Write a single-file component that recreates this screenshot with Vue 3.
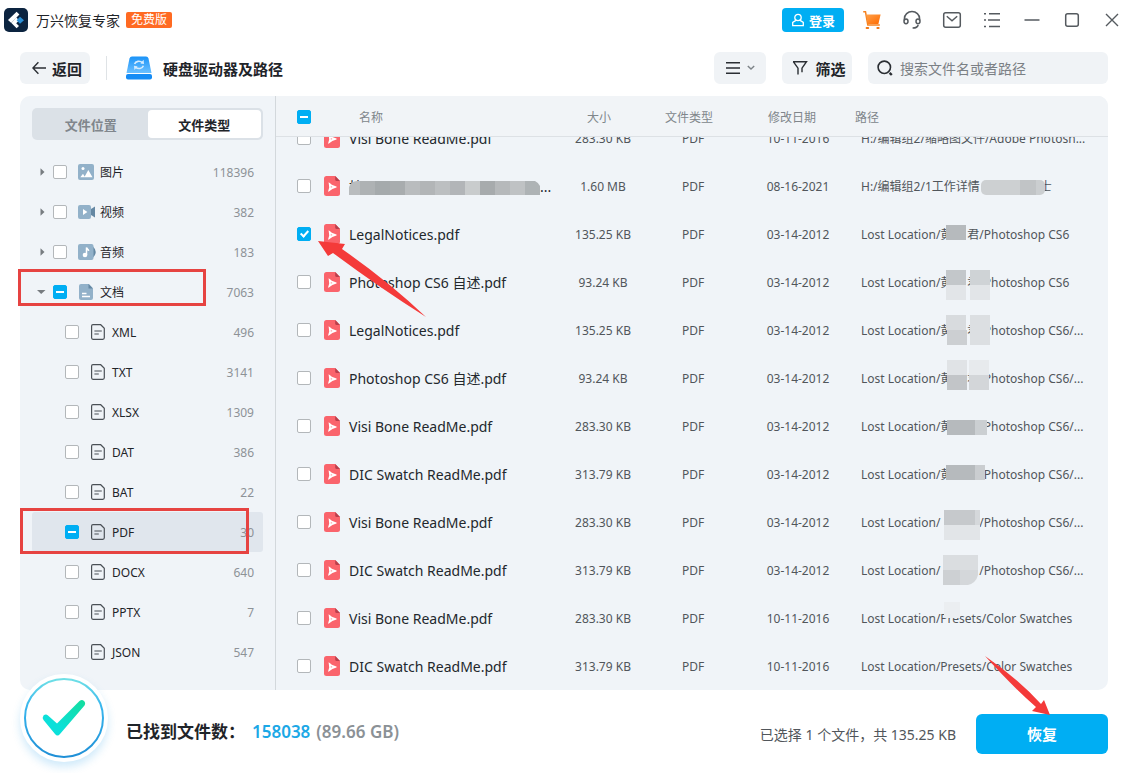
<script setup>
import { ref, onMounted } from 'vue'

const categories = [
  { name: '图片', icon: 'image', count: 118396 },
  { name: '视频', icon: 'video', count: 382 },
  { name: '音频', icon: 'audio', count: 183 },
  { name: '文档', icon: 'doc', count: 7063, open: true, partial: true }
]

const formats = [
  { name: 'XML', count: 496 },
  { name: 'TXT', count: 3141 },
  { name: 'XLSX', count: 1309 },
  { name: 'DAT', count: 386 },
  { name: 'BAT', count: 22 },
  { name: 'PDF', count: 30, partial: true },
  { name: 'DOCX', count: 640 },
  { name: 'PPTX', count: 7 },
  { name: 'JSON', count: 547 }
]

const swatches = 'Lost Location/Presets/Color Swatches'
const files = ref([
  { name: 'Visi Bone ReadMe.pdf', size: '283.30 KB', date: '10-11-2016', path: 'H:/编辑组2/缩略图文件/Adobe Photosh...' },
  { name: '按', nameGap: 177, nameEnd: '...', size: '1.60 MB', date: '08-16-2021', path: 'H:/编辑组2/1工作详情', gap: 60, end: '士' },
  { name: 'LegalNotices.pdf', size: '135.25 KB', date: '03-14-2012', path: 'Lost Location/黄', gap: 15, end: '君/Photoshop CS6', checked: true },
  { name: 'Photoshop CS6 自述.pdf', size: '93.24 KB', date: '03-14-2012', path: 'Lost Location/黄', gap: 15, end: '君/Photoshop CS6' },
  { name: 'LegalNotices.pdf', size: '135.25 KB', date: '03-14-2012', path: 'Lost Location/黄', gap: 15, end: '君/Photoshop CS6/...' },
  { name: 'Photoshop CS6 自述.pdf', size: '93.24 KB', date: '03-14-2012', path: 'Lost Location/黄', gap: 15, end: '君/Photoshop CS6/...' },
  { name: 'Visi Bone ReadMe.pdf', size: '283.30 KB', date: '03-14-2012', path: 'Lost Location/黄', gap: 27, end: '/Photoshop CS6/...' },
  { name: 'DIC Swatch ReadMe.pdf', size: '313.79 KB', date: '03-14-2012', path: 'Lost Location/黄', gap: 27, end: '/Photoshop CS6/...' },
  { name: 'Visi Bone ReadMe.pdf', size: '283.30 KB', date: '03-14-2012', path: 'Lost Location/', gap: 39, end: '/Photoshop CS6/...' },
  { name: 'DIC Swatch ReadMe.pdf', size: '313.79 KB', date: '03-14-2012', path: 'Lost Location/', gap: 39, end: '/Photoshop CS6/...' },
  { name: 'Visi Bone ReadMe.pdf', size: '283.30 KB', date: '10-11-2016', path: swatches },
  { name: 'DIC Swatch ReadMe.pdf', size: '313.79 KB', date: '10-11-2016', path: swatches }
])

const nameMosaic = ['#b9bcbe', '#aeb2b4', '#a5aaac', '#a8acae', '#b9bcbe', '#b2b5b7', '#bcbfc1', '#b2b5b8', '#c9cccd', '#a7abad', '#b6b9bb', '#bfc2c4', '#aeb3b5']

const list = ref(null)
onMounted(() => {
  list.value.scrollTop = list.value.scrollHeight
})
</script>

<template>
  <div class="app">
    <header class="titlebar">
      <svg class="logo" width="24" height="24" viewBox="0 0 24 24">
        <rect width="24" height="24" rx="5" fill="#0c2440" />
        <path d="M12.6 3.8 15.4 6.6 10.6 11.4 7.3 15 4 11.9z" fill="#fff" />
        <path d="M12.2 9.4 15.2 12.2 12.2 15.2 15 18 12.6 20.2 7.4 14.9z" fill="#fff" />
        <path d="M12.6 12.2 16 8.8 20 12.2 16 15.8z" fill="#2a8fd6" />
      </svg>
      <span class="product">万兴恢复专家</span>
      <span class="edition">免费版</span>
      <div class="actions">
        <button class="login">
          <svg width="14" height="14" viewBox="0 0 14 14" fill="none" stroke="#fff" stroke-width="1.3">
            <circle cx="7" cy="4.5" r="3.2" />
            <path d="M4.9 7.4 1.7 9.4v3.3h10.6V9.4L9.1 7.4" />
          </svg>
          登录
        </button>
        <button class="tool" aria-label="购物车">
          <svg width="20" height="20" viewBox="0 0 20 20">
            <defs>
              <linearGradient id="cart" x1="0" y1="0" x2="1" y2="1">
                <stop offset="0" stop-color="#ffa14a" />
                <stop offset="1" stop-color="#ff6a00" />
              </linearGradient>
            </defs>
            <path d="M1.2 1.8h2.3l2.3 13.3h12" fill="none" stroke="#f58220" stroke-width="1.5" />
            <path d="M4.1 4.4h14.5l-2.2 9.6H5.8z" fill="url(#cart)" />
            <rect x="3.6" y="17" width="3.6" height="2" rx="1" fill="#f07818" />
            <rect x="14.4" y="17" width="3.2" height="2" rx="1" fill="#f07818" />
          </svg>
        </button>
        <button class="tool" aria-label="客服">
          <svg width="20" height="20" viewBox="0 0 20 20" fill="none" stroke="#555a5f" stroke-width="1.5">
            <path d="M2.4 10.5V8.7a7.6 7.2 0 0 1 15.2 0v1.8" />
            <ellipse cx="4" cy="11.3" rx="2" ry="2.4" />
            <ellipse cx="16" cy="11.3" rx="2" ry="2.4" />
            <path d="M16.2 15c-.5 2-2.400 3-5.600 3.100" />
          </svg>
        </button>
        <button class="tool" aria-label="邮件">
          <svg width="20" height="20" viewBox="0 0 20 20" fill="none" stroke="#555a5f" stroke-width="1.5">
            <rect x="1.7" y="2.7" width="16.6" height="14.6" rx="2" />
            <path d="m4.8 6.3 5.2 4.4 5.2-4.4" />
          </svg>
        </button>
        <button class="tool" aria-label="菜单">
          <svg width="20" height="20" viewBox="0 0 20 20" fill="none" stroke="#555a5f" stroke-width="1.5">
            <path d="M2 3.8h2M7 3.8h11M2 10h2M6 10h12M2 16.4h2M7 16.4h11" />
          </svg>
        </button>
        <button class="tool" aria-label="最小化">
          <svg width="20" height="20" viewBox="0 0 20 20"><path d="M2.5 10h15" stroke="#555a5f" stroke-width="1.5" /></svg>
        </button>
        <button class="tool" aria-label="最大化">
          <svg width="20" height="20" viewBox="0 0 20 20"><rect x="3.7" y="3.7" width="12.6" height="12.6" rx="2" fill="none" stroke="#555a5f" stroke-width="1.5" /></svg>
        </button>
        <button class="tool" aria-label="关闭">
          <svg width="20" height="20" viewBox="0 0 20 20"><path d="m4 4 12 12M16 4 4 16" stroke="#555a5f" stroke-width="1.4" /></svg>
        </button>
      </div>
    </header>

    <div class="toolbar">
      <button class="pill back">
        <svg width="14" height="14" viewBox="0 0 14 14" fill="none" stroke="#2a2e33" stroke-width="1.4"><path d="M14 7H1M6.4 1.2.9 7l5.5 5.8" /></svg>
        返回
      </button>
      <span class="divider"></span>
      <svg width="26" height="24" viewBox="0 0 26 24">
        <defs>
          <linearGradient id="disk" x1="0" y1="0" x2="0" y2="1">
            <stop offset="0" stop-color="#1a93f8" />
            <stop offset="1" stop-color="#6cc0ff" />
          </linearGradient>
        </defs>
        <path d="M6 .5h14q2 0 2.5 2L25.5 17H.5L3.5 2.500Q4 .5 6 .5z" fill="url(#disk)" />
        <rect x="0" y="18" width="26" height="5.500" rx="2" fill="#158cf5" />
        <g fill="none" stroke="#d5ecff" stroke-width="1.6">
          <path d="M8.600 8c1-3 5.400-3.600 7.800-1.300M17.400 9.800c-1 3-5.400 3.600-7.800 1.300" />
        </g>
        <path d="m17.600 3.800.4 4.200-3.600-.6zM8.400 14l-.4-4.200 3.600.6z" fill="#d5ecff" />
      </svg>
      <h1>硬盘驱动器及路径</h1>
      <div class="right">
        <button class="pill view" aria-label="视图">
          <svg width="16" height="14" viewBox="0 0 16 14"><path d="M1 1.800h14M1 7h14M1 12.200h14" stroke="#2a2e33" stroke-width="1.5" /></svg>
          <svg width="8" height="6" viewBox="0 0 8 6"><path d="m.8.9 3.200 3.200L7.200.9" fill="none" stroke="#7d8388" stroke-width="1.4" /></svg>
        </button>
        <button class="pill filter">
          <svg width="16" height="16" viewBox="0 0 16 16" fill="none" stroke="#2a2e33" stroke-width="1.4">
            <path d="M1 1.700h13.500L10 8.200v4M6 14.500V8.200L1.300 1.700" />
          </svg>
          筛选
        </button>
        <label class="pill search">
          <svg width="16" height="16" viewBox="0 0 16 16" fill="none" stroke="#2a2e33" stroke-width="1.6">
            <circle cx="7.300" cy="7.300" r="6.200" />
            <path d="m12.600 12.800 2.200 2.200" stroke-width="2.400" />
          </svg>
          <input type="text" placeholder="搜索文件名或者路径" aria-label="搜索文件名或者路径" />
        </label>
      </div>
    </div>

    <main class="panel">
      <aside>
        <div class="tabs">
          <button>文件位置</button>
          <button class="active">文件类型</button>
        </div>
        <ul class="tree">
          <li v-for="c in categories" :key="c.name">
            <svg class="caret" width="9" height="8" viewBox="0 0 9 8">
              <path :d="c.open ? 'M0 2h8.500L4.200 6z' : 'M3.500.3v7.400L7.500 4z'" fill="#777c80" />
            </svg>
            <label>
              <input type="checkbox" :indeterminate="c.partial" />
              <svg class="cat" width="20" height="16" viewBox="0 0 20 16">
                <template v-if="c.icon === 'image'">
                  <rect width="16" height="16" rx="2" fill="#92b1c9" />
                  <circle cx="5" cy="4.600" r="1.500" fill="#fff" />
                  <path d="M2.300 13.300 5 9.800l2 3.500zM6.300 13.300l4-7.300 4.200 7.300z" fill="#fff" />
                </template>
                <template v-else-if="c.icon === 'video'">
                  <path d="m13 5 4-2.600v11.200L13 11z" fill="#6588a3" />
                  <rect y="1" width="13" height="14" rx="2" fill="#92b1c9" />
                  <path d="M5 5v6l4.400-3z" fill="#fff" />
                </template>
                <template v-else-if="c.icon === 'audio'">
                  <path d="M15 2.500q5.500 5.500 0 11z" fill="#6588a3" />
                  <rect width="15.500" height="16" rx="2" fill="#92b1c9" />
                  <circle cx="7" cy="11" r="2.300" fill="#fff" />
                  <path d="M8.500 11V3.500c.3 1.600 1.800 1.600 2.200 3.300" fill="none" stroke="#fff" stroke-width="1.500" />
                </template>
                <template v-else>
                  <path d="M3 0h8l4 4.500V14q0 2-2 2H3q-2 0-2-2V2q0-2 2-2z" fill="#92b1c9" />
                  <path d="M10.500 0v4.500H15z" fill="#6588a3" />
                  <path d="M4 9.500h4.500M4 12.500h8" stroke="#fff" stroke-width="1.300" />
                </template>
              </svg>
              <span>{{ c.name }}</span>
            </label>
            <span class="count">{{ c.count }}</span>
          </li>
          <li v-for="f in formats" :key="f.name" class="child" :class="{ current: f.partial }">
            <label>
              <input type="checkbox" :indeterminate="f.partial" />
              <svg class="fmt" width="14" height="16" viewBox="0 0 14 16" fill="none" stroke="#4b5157" stroke-width="1.200">
                <path d="M2 .7h7.700l3.600 3.500v9.600q0 1.500-1.500 1.500H2q-1.400 0-1.400-1.500V2.100Q.6.700 2 .7z" />
                <path d="M3.400 7h7.400M3.400 10h4.400" />
              </svg>
              <span>{{ f.name }}</span>
            </label>
            <span class="count">{{ f.count }}</span>
          </li>
        </ul>
      </aside>

      <section ref="list" class="list">
        <table>
          <colgroup>
            <col class="c-check" /><col class="c-name" /><col class="c-size" /><col class="c-type" /><col class="c-date" /><col />
          </colgroup>
          <thead>
            <tr>
              <th class="check"><input type="checkbox" :indeterminate="true" aria-label="全选" /></th>
              <th class="name">名称</th>
              <th>大小</th>
              <th>文件类型</th>
              <th>修改日期</th>
              <th class="path">路径</th>
            </tr>
          </thead>
          <tbody>
            <tr v-for="(f, i) in files" :key="i">
              <td class="check"><input v-model="f.checked" type="checkbox" :aria-label="f.name" /></td>
              <td class="name">
                <div>
                  <svg width="16" height="20" viewBox="0 0 16 20">
                    <path d="M2.500 0h8.700L16 5v12.500q0 2.500-2.500 2.500h-11Q0 20 0 17.500v-15Q0 0 2.500 0z" fill="#fa646c" />
                    <path d="M11.200 0v3.500q0 1.500 1.500 1.500H16z" fill="#b93f4c" />
                    <path d="M4.600 6.200q2 1 3.200 2.500l4.600 1.900q.8.500 0 1L8.400 13l-3.500 2.600q-1 .3-.7-.6l1-3.500z" fill="#fff" />
                    <path d="m6.800 10.300 1.700.7-1.700.6z" fill="#fa646c" />
                  </svg>
                  <span>{{ f.name }}<i v-if="f.nameGap" class="gap" :style="{ width: f.nameGap + 'px' }"></i>{{ f.nameEnd }}</span>
                </div>
              </td>
              <td class="size">{{ f.size }}</td>
              <td class="type">PDF</td>
              <td class="date">{{ f.date }}</td>
              <td class="path">{{ f.path }}<i v-if="f.gap" class="gap" :style="{ width: f.gap + 'px' }"></i>{{ f.end }}</td>
            </tr>
          </tbody>
        </table>
      </section>
    </main>

    <footer>
      <div class="status">
        <svg width="80" height="80" viewBox="0 0 80 80" fill="none">
          <defs>
            <linearGradient id="ring" x1="0" y1="0" x2="0" y2="1">
              <stop offset="0" stop-color="#6fe0e6" />
              <stop offset=".35" stop-color="#38b6ee" />
              <stop offset="1" stop-color="#1f8fd6" />
            </linearGradient>
            <linearGradient id="tick" x1="0" y1="1" x2="1" y2="0">
              <stop offset=".3" stop-color="#0be0da" />
              <stop offset="1" stop-color="#14dd9c" />
            </linearGradient>
          </defs>
          <circle cx="40" cy="40" r="39" fill="#fff" stroke="url(#ring)" stroke-width="2" />
          <path d="M19.500 37.500q2.500-2 4.500 0l9 8L55.500 23q2.500-2 4.500 0t.5 4.500L36 56q-2.500 3-5 0L19.500 42q-1.500-2.500 0-4.500z" fill="url(#tick)" />
        </svg>
      </div>
      <p class="found">已找到文件数：<b>158038</b><span>(89.66 GB)</span></p>
      <p class="chosen">已选择 1 个文件，共 135.25 KB</p>
      <button class="recover">恢复</button>
    </footer>

    <svg class="notes" width="1126" height="773" viewBox="0 0 1126 773" aria-hidden="true">
      <defs>
        <clipPath id="name-clip"><path d="M349 195v-8q2-6 8-6h178q4 2 5 5v9z" /></clipPath>
        <clipPath id="path-clip"><rect x="981" y="180" width="64" height="15" rx="5" /></clipPath>
        <clipPath id="blob-clip"><path d="M943 555h35v20q-2 8-10 10h-25z" /></clipPath>
      </defs>
      <g clip-path="url(#name-clip)">
        <rect v-for="(m, i) in nameMosaic" :key="i" :x="345 + i * 15" y="181" width="15" height="14" :fill="m" />
      </g>
      <g clip-path="url(#path-clip)">
        <rect x="980" y="180" width="40" height="15" fill="#cdd0d2" />
        <rect x="1020" y="180" width="16" height="15" fill="#c1c4c6" />
        <rect x="1036" y="180" width="12" height="15" fill="#cbced0" />
      </g>
      <rect x="946" y="225" width="20" height="15" fill="#b6babd" />
      <g>
        <path d="M946 270h20v15h-20z" fill="#c3c7ca" /><path d="M970 270h20v15h-20z" fill="#cfd3d6" />
        <path d="M946 285h20v15h-20zM970 285h20v15h-20z" fill="#e2e5e8" />
        <path d="M946 315h20v15h-20z" fill="#d8dbde" /><path d="M970 315h20v30h-20z" fill="#dcdfe2" /><path d="M947 330h20v15h-20z" fill="#cccfd2" />
        <path d="M947 360h20v15h-20z" fill="#e0e3e6" /><path d="M969 360h20v15h-20z" fill="#e7eaed" />
        <path d="M947 375h20v15h-20z" fill="#c2c5c8" /><path d="M969 375h20v15h-20z" fill="#d3d6d9" />
        <path d="M947 420h28v15h-28z" fill="#b6babd" /><path d="M975 420h12v15h-12z" fill="#cbcfd2" />
        <path d="M946 465h29v15h-29z" fill="#b6babd" /><path d="M975 465h10v15h-10z" fill="#cacdd0" />
        <path d="M944 510h31v15h-31z" fill="#c6c9cc" /><path d="M975 510h5v15h-5z" fill="#d5d8db" /><path d="M944 525h36v15h-36z" fill="#e2e5e8" />
      </g>
      <g clip-path="url(#blob-clip)">
        <path d="M943 555h35v15h-35z" fill="#dadde0" /><path d="M943 570h35v15h-35z" fill="#d4d7da" /><path d="M943 570h17v15h-17z" fill="#cdd0d3" />
      </g>
      <path d="M944 602h16v16h-16z" fill="#ebeef1" />
      <g fill="none" stroke="#e64341" stroke-width="3">
        <rect x="19.500" y="270.500" width="185" height="34" />
        <rect x="21.500" y="509.500" width="226" height="43" />
      </g>
      <g fill="#f43a3a">
        <path d="M318 241 345 244 342 249q46 32 84 68-46-29-93-64l-5 3z" />
        <path d="M985 656q32 22 56 48l3-4 6 15-18-4 4-4q-23-20-51-51z" />
      </g>
    </svg>
  </div>
</template>

<style>
body {
  background: #fff;
}
</style>

<style scoped>
.app {
  position: relative;
  display: flex;
  flex-direction: column;
  height: 100vh;
  overflow: hidden;
  color: #1f2429;
  font-family: 'Noto Sans', 'Noto Sans CJK SC', sans-serif;
  font-size: 14px;
}
button,
input {
  font: inherit;
  color: inherit;
  margin: 0;
  padding: 0;
  border: 0;
}
button {
  display: flex;
  align-items: center;
  justify-content: center;
  background: none;
}
svg {
  display: block;
  flex: none;
}
.titlebar {
  display: flex;
  align-items: center;
  height: 40px;
  padding: 0 2px 0 4px;
}
.product {
  margin-left: 8px;
}
.edition {
  margin-left: 6px;
  padding: 0 5px;
  border-radius: 2px;
  background: #ff6a22;
  color: #fff;
  font-size: 12px;
  line-height: 16px;
}
.actions {
  display: flex;
  align-items: center;
  gap: 16px;
  margin-left: auto;
}
.login {
  gap: 4px;
  width: 62px;
  height: 24px;
  border-radius: 4px;
  background: #00aef3;
  color: #fff;
  font-size: 13px;
  font-weight: 700;
}
.tool {
  width: 24px;
  height: 24px;
}
.toolbar {
  display: flex;
  align-items: center;
  height: 32px;
  padding: 12px 18px 12px 20px;
}
.pill {
  height: 32px;
  border-radius: 6px;
  background: #f0f3f6;
  font-size: 15px;
  font-weight: 700;
}
.back {
  gap: 6px;
  width: 70px;
  padding-left: 4px;
}
.divider {
  width: 1px;
  height: 24px;
  margin: 0 19px 0 16px;
  background: #dfe3e6;
}
h1 {
  margin: 0 0 0 11px;
  font-size: 15px;
  font-weight: 700;
}
.right {
  display: flex;
  gap: 16px;
  margin-left: auto;
}
.view {
  gap: 6px;
  width: 52px;
}
.filter {
  gap: 7px;
  width: 70px;
  padding-left: 4px;
}
.search {
  display: flex;
  align-items: center;
  gap: 7px;
  width: 240px;
  box-sizing: border-box;
  padding: 0 9px;
  font-size: 14px;
  font-weight: 400;
}
.search input {
  flex: 1;
  min-width: 0;
  background: none;
  outline: none;
}
.search input::placeholder {
  color: #7b8085;
}
.panel {
  display: flex;
  flex: 1;
  min-height: 0;
  margin: 0 18px 0 20px;
  border-radius: 10px;
  background: #f0f4f8;
  overflow: hidden;
}
aside {
  width: 256px;
  box-sizing: border-box;
  padding: 12px 12px 0;
  border-right: 1px solid #d3d8dc;
}
.tabs {
  display: flex;
  height: 32px;
  box-sizing: border-box;
  padding: 2px;
  border-radius: 5px;
  background: #dbe1e7;
}
.tabs button {
  flex: 1;
  border-radius: 4px;
  color: #80868c;
  font-size: 13px;
  font-weight: 700;
}
.tabs .active {
  background: #fff;
  color: #1f2429;
}
.tree {
  margin: 12px 0 0;
  padding: 0;
  list-style: none;
  font-size: 12px;
}
.tree li {
  display: flex;
  align-items: center;
  height: 40px;
  padding: 0 9px 0 5px;
}
.tree .child {
  padding-left: 33px;
}
.tree .current {
  border-radius: 3px;
  background: #e0e6ed;
}
.tree label {
  display: flex;
  align-items: center;
}
.caret {
  margin-right: 7px;
}
.cat {
  margin: 0 2px 0 11px;
}
.fmt {
  margin: 0 7px 0 12px;
}
.count {
  margin-left: auto;
  color: #8d9297;
}
input[type='checkbox'] {
  display: block;
  appearance: none;
  position: relative;
  width: 14px;
  height: 14px;
  border: 1px solid #b3b7ba;
  border-radius: 2px;
  background: #fff;
}
input[type='checkbox']:checked,
input[type='checkbox']:indeterminate {
  border-color: #00aef3;
  background: #00aef3;
}
input[type='checkbox']:indeterminate::after {
  content: '';
  position: absolute;
  inset: 5px 2px;
  background: #fff;
}
input[type='checkbox']:checked::after {
  content: '';
  position: absolute;
  left: 4px;
  top: 1px;
  width: 3px;
  height: 6px;
  border: solid #fff;
  border-width: 0 2px 2px 0;
  transform: rotate(42deg);
}
.list {
  flex: 1;
  min-width: 0;
  overflow-y: auto;
  scrollbar-width: none;
}
table {
  width: 100%;
  table-layout: fixed;
  border-collapse: separate;
  border-spacing: 0;
}
.c-check { width: 48px; }
.c-name { width: 235px; }
.c-size { width: 80px; }
.c-type { width: 100px; }
.c-date { width: 106px; }
th {
  position: sticky;
  top: 0;
  z-index: 1;
  height: 38px;
  padding: 2px 0 0;
  border-bottom: 1px solid #dde1e5;
  background: #f1f4f7;
  color: #80868b;
  font-size: 12px;
  font-weight: 400;
}
th.name {
  padding-left: 35px;
  text-align: left;
}
th.path {
  padding-left: 10px;
  text-align: left;
}
.check {
  padding-left: 21px;
}
td {
  height: 48px;
  padding: 0;
  color: #51565b;
  font-size: 12px;
  text-align: center;
  white-space: nowrap;
}
.name div {
  display: flex;
  align-items: center;
  gap: 9px;
  color: #23282d;
  font-size: 14px;
}
td.size,
td.type {
  padding-left: 8px;
}
td.date {
  padding-left: 12px;
}
td.path {
  padding-left: 16px;
  text-align: left;
}
.gap {
  display: inline-block;
}
footer {
  display: flex;
  align-items: center;
  height: 83px;
  box-sizing: border-box;
  padding: 4px 18px 0 20px;
}
.status {
  position: relative;
  margin-top: -31px;
  border: 4px solid #fff;
  border-radius: 50%;
  background: #fff;
  box-shadow: 0 5px 9px rgba(40, 160, 230, 0.22);
}
p {
  margin: 0;
}
.found {
  margin: 0 0 7px 18px;
  font-size: 17px;
  font-weight: 700;
}
.found b {
  margin: 0 6px 0 7px;
  color: #1ca8e6;
  font-weight: 600;
}
.found span {
  color: #8b9196;
  font-weight: 600;
}
.chosen {
  margin-left: auto;
  color: #51565b;
}
.recover {
  width: 132px;
  height: 40px;
  margin-left: 20px;
  border-radius: 6px;
  background: #00aef3;
  color: #fff;
  font-size: 15px;
  font-weight: 700;
}
.notes {
  position: absolute;
  left: 0;
  top: 0;
  z-index: 2;
  pointer-events: none;
}
</style>
